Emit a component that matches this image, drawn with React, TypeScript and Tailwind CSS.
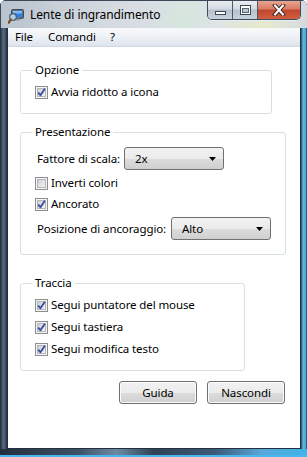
import type { ReactNode } from 'react';

function CheckBox({ checked }: { checked: boolean }) {
  return (
    <svg width="13" height="13" viewBox="0 0 13 13" className="shrink-0">
      <defs>
        <linearGradient id="cbInner" x1="0" y1="0" x2="1" y2="1">
          <stop offset="0" stopColor="#c9cdd2" />
          <stop offset="1" stopColor="#f7f7f7" />
        </linearGradient>
      </defs>
      <rect x="0.5" y="0.5" width="12" height="12" fill="#f5f5f5" stroke="#8e8f8f" />
      <rect x="2.5" y="2.5" width="8" height="8" fill="url(#cbInner)" stroke="#b3b7bc" />
      {checked && (
        <path d="M3.2 6.6 L5.4 9.2 L9.9 2.8" fill="none" stroke="#3c4f9f" strokeWidth="1.9" strokeLinejoin="round" />
      )}
    </svg>
  );
}

function CheckRow({ checked, label, className = '' }: { checked: boolean; label: string; className?: string }) {
  return (
    <div className={`flex items-center h-[16px] ${className}`}>
      <CheckBox checked={checked} />
      <span className="ml-[3px] leading-[16px] whitespace-nowrap">{label}</span>
    </div>
  );
}

function Combo({ value, width }: { value: string; width: string }) {
  return (
    <div
      className={`${width} h-[23px] shrink-0 flex items-center justify-between rounded-[3px] border border-[#707070] bg-[linear-gradient(to_bottom,#f2f2f2_0%,#ebebeb_50%,#dddddd_51%,#cfcfcf_100%)] pl-[10px] pr-[7px]`}
    >
      <span>{value}</span>
      <svg width="7" height="4" viewBox="0 0 7 4">
        <path d="M0 0 H7 L3.5 4 Z" fill="#000" />
      </svg>
    </div>
  );
}

function Group({ title, width, className = '', children }: { title: string; width: string; className?: string; children: ReactNode }) {
  return (
    <fieldset className={`${width} rounded-[3px] border border-[#d5dfe5] px-[11px] ${className}`}>
      <legend className="px-[3px] leading-[16px]">{title}</legend>
      <div className="pl-[3px]">{children}</div>
    </fieldset>
  );
}

function VistaButton({ label }: { label: string }) {
  return (
    <div className="w-[78px] h-[23px] flex items-center justify-center rounded-[3px] border border-[#707070] bg-[linear-gradient(to_bottom,#f2f2f2_0%,#ebebeb_50%,#dddddd_51%,#cfcfcf_100%)] shadow-[inset_0_0_0_1px_#fcfcfc]">
      {label}
    </div>
  );
}

function AppIcon() {
  return (
    <svg width="16" height="16" viewBox="0 0 16 16">
      <rect x="3.5" y="1.5" width="12" height="9" rx="1" fill="#5d7388" stroke="#3b4b5c" />
      <rect x="5" y="3" width="9" height="6" fill="#2f7fe0" />
      <rect x="5" y="3" width="9" height="2.5" fill="#7fb8f5" />
      <rect x="8" y="10.5" width="4" height="2" fill="#8a98a6" />
      <circle cx="5" cy="9" r="3.3" fill="#c9e3f7" fillOpacity="0.8" stroke="#4a5866" strokeWidth="1.2" />
      <path d="M2.8 11.4 L0.8 14.6" stroke="#7a4a22" strokeWidth="2.2" strokeLinecap="round" />
    </svg>
  );
}

function TitleButtons() {
  return (
    <div className="flex h-[19px] rounded-b-[5px] border border-t-0 border-[#3d4c5d] overflow-hidden shadow-[0_1px_0_#e8eef4]">
      <div className="w-[25px] flex items-center justify-center border-r border-[#4b5b6c] bg-[linear-gradient(to_bottom,#e9edf1_0%,#d3dae2_45%,#b6c1cc_50%,#c8d2dc_100%)]">
        <svg width="11" height="6" viewBox="0 0 11 6" className="mt-[5px]">
          <rect x="0.5" y="1.5" width="10" height="3" fill="#fff" stroke="#3a4653" />
        </svg>
      </div>
      <div className="w-[25px] flex items-center justify-center border-r border-[#4b5b6c] bg-[linear-gradient(to_bottom,#e9edf1_0%,#d3dae2_45%,#b6c1cc_50%,#c8d2dc_100%)]">
        <svg width="11" height="10" viewBox="0 0 11 10">
          <rect x="0.5" y="0.5" width="10" height="9" fill="#fff" stroke="#3a4653" />
          <rect x="2.5" y="3.5" width="6" height="4" fill="#b9c4cf" stroke="#5a6674" />
        </svg>
      </div>
      <div className="w-[42px] flex items-center justify-center bg-[linear-gradient(to_bottom,#e8a492_0%,#d97a63_45%,#c2452c_50%,#d25f3f_100%)]">
        <svg width="14" height="12" viewBox="0 0 14 12">
          <path d="M3 1.5 L11 10.5 M11 1.5 L3 10.5" stroke="#3b2420" strokeWidth="4" strokeLinecap="square" />
          <path d="M3 1.5 L11 10.5 M11 1.5 L3 10.5" stroke="#fff" strokeWidth="2" strokeLinecap="square" />
        </svg>
      </div>
    </div>
  );
}

export default function App() {
  return (
    <div className="w-[307px] h-[457px] flex flex-col overflow-hidden rounded-t-[6px] bg-[#2b3d50] font-['Segoe_UI','Noto_Sans',sans-serif] text-[11.5px] tracking-[-0.1px] text-black">
      {/* title bar */}
      <div className="h-[28px] flex items-start border-t border-l border-[#3a4857] bg-[radial-gradient(circle_at_85%_90%,#e6eacb_0%,transparent_18%),radial-gradient(circle_at_60%_70%,#d5e6dc_0%,transparent_20%),linear-gradient(to_right,#b9c3cd_0%,#d4dae0_35%,#dfe4e8_70%,#d2d9e0_100%)]">
        <div className="ml-[7px] mt-[7px]">
          <AppIcon />
        </div>
        <span className="ml-[6px] mt-[6px] leading-[16px] text-[12px]">Lente di ingrandimento</span>
        <div className="ml-auto mr-[6px]">
          <TitleButtons />
        </div>
      </div>

      <div className="flex flex-1">
        <div className="w-[7px] bg-[linear-gradient(to_right,#1a2633_0%,#3e5165_25%,#56697d_55%,#3a4c5f_85%,#1e2a37_100%)]" />

        {/* client area */}
        <div className="flex-1 flex flex-col bg-white border-l border-r border-b border-[#23303d]">
          {/* menu */}
          <div className="h-[19px] flex items-center bg-[linear-gradient(to_bottom,#f8f9fb_0%,#eef1f6_50%,#dde4ee_100%)] border-b border-[#d0d7e2]">
            <span className="ml-[7px]">File</span>
            <span className="ml-[15px]">Comandi</span>
            <span className="ml-[14px]">?</span>
          </div>

          <div className="flex-1 flex flex-col pl-[12px]">
            <Group title="Opzione" width="w-[252px]" className="mt-[15px] pt-[6px] pb-[13px]">
              <CheckRow checked label="Avvia ridotto a icona" />
            </Group>

            <Group title="Presentazione" width="w-[266px]" className="mt-[10px] pt-[7px] pb-[14px]">
              <div className="flex items-center">
                <span className="w-[89px] shrink-0 pl-[2px] whitespace-nowrap">Fattore di scala:</span>
                <Combo value="2x" width="w-[100px]" />
              </div>
              <CheckRow checked={false} label="Inverti colori" className="mt-[5px]" />
              <CheckRow checked label="Ancorato" className="mt-[5px]" />
              <div className="flex items-center mt-[5px]">
                <span className="w-[136px] shrink-0 pl-[2px] whitespace-nowrap">Posizione di ancoraggio:</span>
                <Combo value="Alto" width="w-[100px]" />
              </div>
            </Group>

            <Group title="Traccia" width="w-[225px]" className="mt-[20px] pt-[6px] pb-[13px]">
              <CheckRow checked label="Segui puntatore del mouse" />
              <CheckRow checked label="Segui tastiera" className="mt-[6px]" />
              <CheckRow checked label="Segui modifica testo" className="mt-[6px]" />
            </Group>

            <div className="flex justify-end gap-[10px] mt-[10px] pr-[15px]">
              <VistaButton label="Guida" />
              <VistaButton label="Nascondi" />
            </div>
          </div>
        </div>

        <div className="w-[6px] bg-[linear-gradient(to_right,#2a4358_0%,#5cb9e6_35%,#4aa9dc_75%,#1d3549_100%)]" />
      </div>

      <div className="h-[8px] bg-[linear-gradient(to_right,#22303e_0%,#3c5064_25%,#6d8aa3_38%,#2f4254_50%,#3c5a78_70%,#58a7d8_85%,#3fb3ea_100%)] shadow-[inset_0_-2px_0_#45b8ee]" />
    </div>
  );
}
